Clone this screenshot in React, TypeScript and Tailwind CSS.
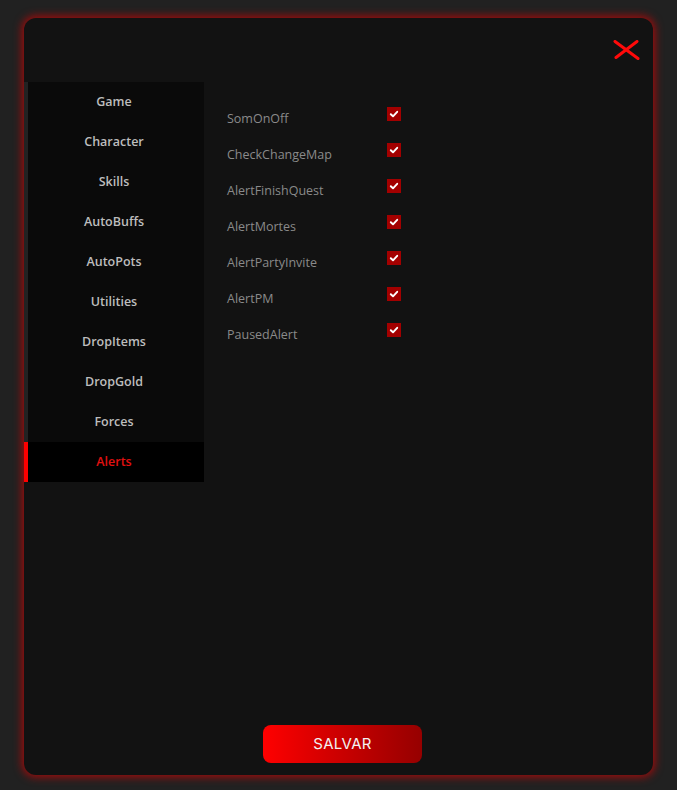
import React from "react";

const items = ["Game", "Character", "Skills", "AutoBuffs", "AutoPots", "Utilities", "DropItems", "DropGold", "Forces", "Alerts"];
const opts = ["SomOnOff", "CheckChangeMap", "AlertFinishQuest", "AlertMortes", "AlertPartyInvite", "AlertPM", "PausedAlert"];

export default function App() {
  return (
    <div className="w-[677px] h-[790px] bg-[#212121] pt-[18px] px-[24px]" style={{ fontFamily: '"Open Sans", "Noto Sans", sans-serif' }}>
      <div className="relative w-[629px] h-[757px] bg-[#121212] rounded-[12px] shadow-[0_0_8px_2px_rgba(220,0,0,0.7)] flex flex-col">
        <div className="h-[64px] flex justify-end items-start pr-[13px] pt-[22px]">
          <svg width="27" height="20" viewBox="0 0 27 20">
            <path d="M2 1.5 L25 18.5" stroke="#ff0a0a" strokeWidth="3" strokeLinecap="round" />
            <path d="M24 1.5 L3 17.5" stroke="#ff0a0a" strokeWidth="3" strokeLinecap="round" />
          </svg>
        </div>
        <div className="flex flex-1">
          <div className="w-[180px] flex flex-col self-start">
            {items.map((it) => {
              const active = it === "Alerts";
              return (
                <div
                  key={it}
                  className={
                    active
                      ? "h-[40px] border-l-4 border-[#ff0000] bg-black flex items-center justify-center pr-[4px] text-[12.5px] font-semibold text-[#e01010]"
                      : "h-[40px] border-l-4 border-[#222222] bg-[#0a0a0a] flex items-center justify-center pr-[4px] text-[12.5px] font-semibold text-[#bdbdbd]"
                  }
                >
                  <span>{it}</span>
                </div>
              );
            })}
          </div>
          <div className="pl-[23px] pt-[14px] flex flex-col">
            {opts.map((o) => (
              <div key={o} className="h-[36px] flex items-start">
                <span className="w-[160px] mt-[14px] leading-[18px] text-[12.5px] text-[#8a8a8a]">{o}</span>
                <span className="mt-[11px] w-[14px] h-[14px] bg-[#a30000] flex items-center justify-center">
                  <svg width="10" height="10" viewBox="0 0 10 10">
                    <path d="M1.8 5.2 L4 7.3 L8.2 2.8" stroke="#ffffff" strokeWidth="1.9" fill="none" strokeLinecap="round" strokeLinejoin="round" />
                  </svg>
                </span>
              </div>
            ))}
          </div>
        </div>
        <div className="flex justify-center pl-[8px] pb-[12px]">
          <button
            className="w-[159px] h-[38px] rounded-[8px] bg-gradient-to-r from-[#ff0000] to-[#960000] text-[#f2f2f2] text-[15px] font-normal tracking-[0.3px]"
            style={{ fontFamily: '"Inter", "Noto Sans", sans-serif' }}
          >
            SALVAR
          </button>
        </div>
      </div>
    </div>
  );
}
